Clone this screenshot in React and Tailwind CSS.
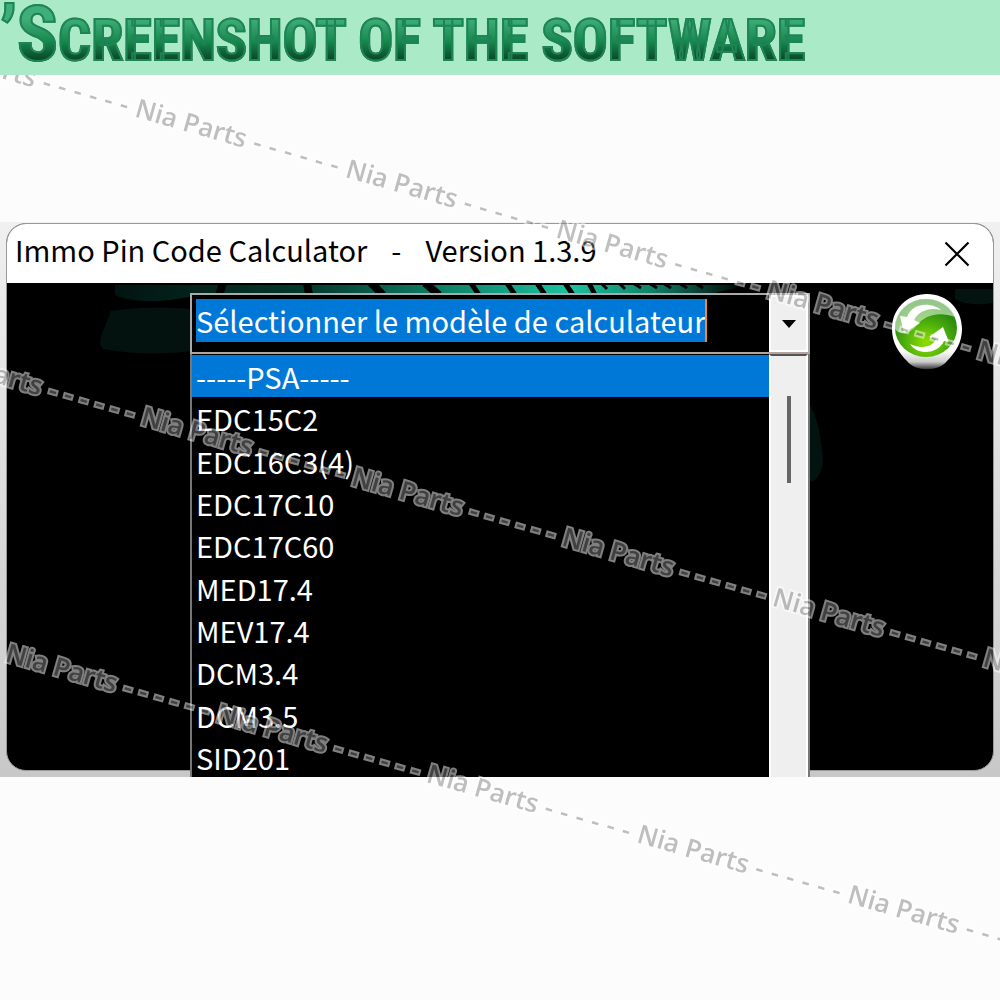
import React, { useState } from "react";

const MODELS = [
    "-----PSA-----",
    "EDC15C2",
    "EDC16C3(4)",
    "EDC17C10",
    "EDC17C60",
    "MED17.4",
    "MEV17.4",
    "DCM3.4",
    "DCM3.5",
    "SID201",
];

const WATERMARKS = [
    "left-[-69px] top-[29px]",
    "left-[-63px] top-[337px]",
    "left-[12px] top-[634px]",
];

function Banner() {
    return (
        <header className="relative z-10 h-[75px] overflow-hidden bg-[#abeac6]">
            <h1 className="whitespace-nowrap bg-linear-to-b from-[#3fae78] from-25% via-[#178a50] via-55% to-[#0a4a28] to-80% bg-clip-text font-['Roboto_Condensed','Roboto',sans-serif] text-[58px] leading-[68px] font-bold uppercase text-transparent [-webkit-text-stroke:2px_#1f8455]">
                <span className="text-[76px]">’S</span>creenshot of the software
            </h1>
        </header>
    );
}

function Backdrop() {
    return (
        <svg
            aria-hidden="true"
            viewBox="0 0 986 240"
            preserveAspectRatio="none"
            className="absolute inset-x-0 top-0 h-[240px] w-full"
        >
            <defs>
                <linearGradient id="glow" x1="0" x2="1" y1="0" y2="0">
                    <stop offset="0" stopColor="#021411" />
                    <stop offset="0.3" stopColor="#04382c" />
                    <stop offset="0.5" stopColor="#0c7a62" />
                    <stop offset="0.72" stopColor="#1cc2a0" />
                    <stop offset="0.85" stopColor="#128068" />
                    <stop offset="1" stopColor="#000" />
                </linearGradient>
            </defs>
            <path d="M108 2H740L700 12H190C150 22 120 18 108 12Z" fill="url(#glow)" />
            <path d="M104 28Q140 22 186 26V68Q140 74 96 66 90 60 96 48Z" fill="#03110f" />
            <g stroke="#000" strokeWidth="8">
                <path d="M216 0l-4 12M300 0l2 12M364 0l12 12M418 0l14 12" />
                <path strokeWidth="5" d="M464 0l8 12M500 0l8 12M530 0l8 12M558 0l8 12M582 0l6 12" />
                <path strokeWidth="3" d="M594 0l6 6M612 0l6 6M626 0l8 5M642 0l8 5M656 0l8 5M672 0l8 5M688 0l8 5" />
            </g>
            <path d="M802 120q12 20 14 60q-4 20-14 18Z" fill="#021310" />
            <path d="M948 6h38v14q-24 4-38-4Z" fill="#021310" />
        </svg>
    );
}

function RefreshIcon() {
    return (
        <svg viewBox="0 0 72 78" className="h-[78px] w-[72px]" aria-hidden="true">
            <defs>
                <radialGradient id="ball" cx="0.5" cy="0.75" r="0.7">
                    <stop offset="0" stopColor="#8fe000" />
                    <stop offset="0.5" stopColor="#4cae0c" />
                    <stop offset="1" stopColor="#1c7a10" />
                </radialGradient>
                <linearGradient id="shade" x1="0" x2="0" y1="0" y2="1">
                    <stop offset="0.75" stopColor="#fff" />
                    <stop offset="0.9" stopColor="#ccc" />
                    <stop offset="1" stopColor="#333" />
                </linearGradient>
            </defs>
            <path d="M36 1C56 1 71 16 71 36C71 50 64 60 56 68C48 79 24 79 16 68C8 60 1 50 1 36C1 16 16 1 36 1Z" fill="url(#shade)" />
            <ellipse cx="35" cy="35" rx="31" ry="29" fill="url(#ball)" />
            <path d="M4 36C3 0 56 -4 64 24C48 18 34 22 26 32C20 40 10 44 4 36Z" fill="#d5f0cc" opacity="0.65" />
            <path d="M50 17C42 10 22 8 16 24L9 23L13 40L29 30L23 27C28 18 38 14 50 17Z" fill="#fff" />
            <path d="M19 51C28 64 48 60 53 48L58 49L52 34L38 44L45 46C42 53 32 57 19 51Z" fill="#fff" />
        </svg>
    );
}

function Watermark({ place }) {
    return (
        <div
            aria-hidden="true"
            className={`pointer-events-none absolute flex origin-top-left rotate-[16deg] font-['Open_Sans',sans-serif] text-[26px] leading-[36px] font-semibold text-[#828282] opacity-50 [paint-order:stroke] [-webkit-text-stroke:4px_#fff] ${place}`}
        >
            {[0, 1, 2, 3, 4, 5].map((i) => (
                <div key={i} className="flex w-[219px] shrink-0 justify-between pr-2">
                    <span>Nia Parts</span>
                    {[0, 1, 2, 3, 4, 5].map((d) => (
                        <span key={d}>-</span>
                    ))}
                </div>
            ))}
        </div>
    );
}

export default function App() {
    const [text, setText] = useState("Sélectionner le modèle de calculateur");
    const [selected, setSelected] = useState(0);
    const [open, setOpen] = useState(true);

    function pick(i) {
        setSelected(i);
        setText(MODELS[i]);
    }

    return (
        <div className="relative min-h-screen overflow-hidden bg-[#fdfcfd]">
            <Banner />

            <main className="mt-[147px] overflow-hidden bg-linear-to-b from-[#f0f0f0] to-[#c8c8c8] px-[6px] pt-px pb-[6px] font-['Noto_Sans_CJK_SC',sans-serif] text-[29px]">
                <section className="rounded-[20px] border border-[#999] bg-black">
                    <div className="flex h-[59px] items-center justify-between rounded-t-[19px] bg-white pr-[22px] pl-2">
                        <h2 className="flex gap-6 pb-2 whitespace-nowrap text-black">
                            <span>Immo Pin Code Calculator</span>
                            <span>-</span>
                            <span>Version 1.3.9</span>
                        </h2>
                        <button aria-label="Fermer" className="p-px">
                            <svg viewBox="0 0 26 26" className="size-[26px]" fill="none" stroke="#000" strokeWidth="2.2">
                                <path d="M1.500 1.500L24.500 24.500M24.500 1.500L1.500 24.500" />
                            </svg>
                        </button>
                    </div>

                    <div className="relative flex min-h-[487px] items-start pt-[10px]">
                        <Backdrop />
                        <div className="flex-1 pr-[30px]" />

                        <div className="relative w-[620px]">
                            <div className="flex h-[61px] border-2 border-[#aaa] border-b-[#b3a59e] bg-black">
                                <div className="flex flex-1 items-start p-1">
                                    <input
                                        aria-label="Modèle de calculateur"
                                        value={text}
                                        onChange={(e) => setText(e.target.value)}
                                        className="field-sizing-content h-[43px] border-r-2 border-[#f08c28] bg-[#0078d7] text-white outline-none"
                                    />
                                </div>
                                <button
                                    aria-label="Ouvrir la liste"
                                    onClick={() => setOpen(!open)}
                                    className="flex w-[39px] items-center justify-center border-2 border-white bg-[#efefef]"
                                >
                                    <svg viewBox="0 0 14 8" className="h-2 w-[14px]">
                                        <path d="M0 0H14L7 8Z" fill="#000" />
                                    </svg>
                                </button>
                            </div>

                            {open && (
                                <div className="absolute top-full flex h-[424px] w-full border-x-2 border-[#777] bg-black">
                                    <ul className="flex flex-1 flex-col pt-px">
                                        {MODELS.map((m, i) => (
                                            <li key={m} className="flex flex-1">
                                                <button
                                                    onClick={() => pick(i)}
                                                    className={
                                                        i === selected
                                                            ? "flex-1 bg-[#0078d7] pl-1 text-left leading-[42px] text-white"
                                                            : "flex-1 pl-1 text-left leading-[42px] text-white"
                                                    }
                                                >
                                                    {m}
                                                </button>
                                            </li>
                                        ))}
                                    </ul>
                                    <div className="w-[39px] border-x-2 border-t-2 border-white border-t-[#555] bg-[#efefef] pt-[40px]">
                                        <div className="mx-auto h-[87px] w-1 bg-[#666]" />
                                    </div>
                                </div>
                            )}
                        </div>

                        <div className="flex flex-1 justify-end pr-[30px]">
                            <button aria-label="Actualiser" className="relative">
                                <RefreshIcon />
                            </button>
                        </div>
                    </div>
                </section>
            </main>

            {WATERMARKS.map((place) => (
                <Watermark key={place} place={place} />
            ))}
        </div>
    );
}
